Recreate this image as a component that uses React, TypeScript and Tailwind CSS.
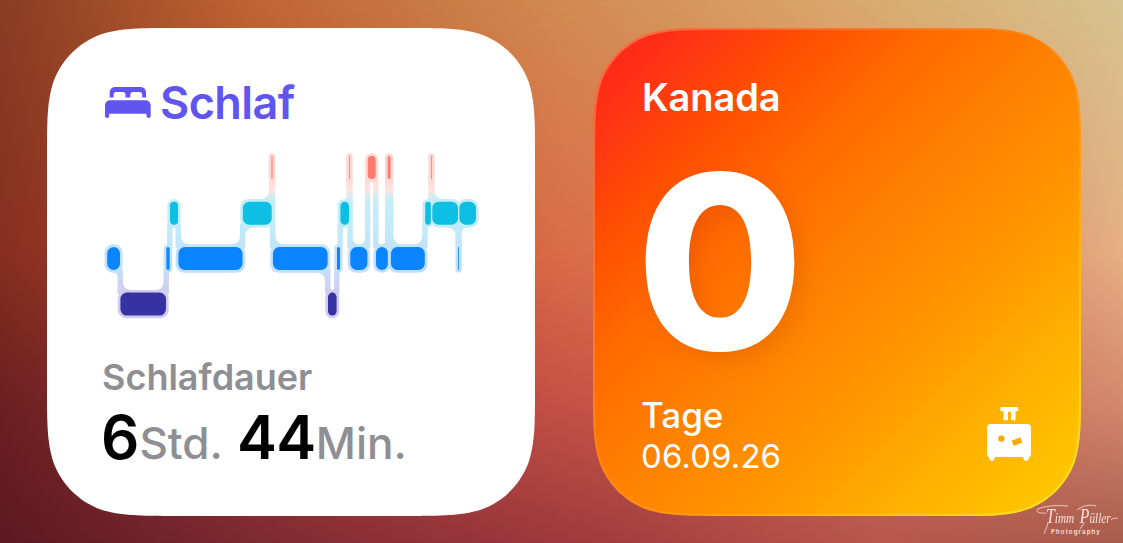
import React from 'react';

type Stage = 'awake' | 'rem' | 'core' | 'deep';

interface Segment {
  stage: Stage;
  start: number;
  end: number;
}

const STAGES: Record<Stage, { y: number; color: string }> = {
  awake: { y: 6, color: '#fb7b6d' },
  rem: { y: 51.7, color: '#0dbfe3' },
  core: { y: 97, color: '#0a84ff' },
  deep: { y: 142.6, color: '#3732a3' },
};

const BAR_HEIGHT = 23;
const PAD = 2.7;

const segments: Segment[] = [
  { stage: 'core', start: 5, end: 18.2 },
  { stage: 'deep', start: 18.2, end: 64.2 },
  { stage: 'core', start: 64.2, end: 67.8 },
  { stage: 'rem', start: 67.8, end: 76.2 },
  { stage: 'core', start: 76.2, end: 140.7 },
  { stage: 'rem', start: 140.7, end: 169.9 },
  { stage: 'awake', start: 169.3, end: 170.7 },
  { stage: 'core', start: 170.7, end: 225.8 },
  { stage: 'deep', start: 225.8, end: 234.8 },
  { stage: 'core', start: 234.8, end: 238.2 },
  { stage: 'rem', start: 238.2, end: 247.2 },
  { stage: 'awake', start: 246.9, end: 248.1 },
  { stage: 'core', start: 248.1, end: 265.6 },
  { stage: 'awake', start: 265.6, end: 273.8 },
  { stage: 'core', start: 273.8, end: 286 },
  { stage: 'awake', start: 285.5, end: 288.7 },
  { stage: 'core', start: 288.7, end: 323 },
  { stage: 'rem', start: 323, end: 329 },
  { stage: 'awake', start: 328.9, end: 330.1 },
  { stage: 'rem', start: 330.1, end: 356.2 },
  { stage: 'core', start: 356, end: 357.2 },
  { stage: 'rem', start: 357.2, end: 374.2 },
];

// Vertical link between two neighbouring stages, flared where it meets a bar
function connectorPath(a: Segment, b: Segment) {
  const x = (a.end + b.start) / 2;
  const down = STAGES[b.stage].y > STAGES[a.stage].y;
  const dir = down ? 1 : -1;
  const ya = STAGES[a.stage].y + (down ? BAR_HEIGHT + PAD : -PAD);
  const yb = STAGES[b.stage].y + (down ? -PAD : BAR_HEIGHT + PAD);
  const ra = Math.min(9, Math.max(0, (a.end - a.start) / 2 - PAD));
  const rb = Math.min(9, Math.max(0, (b.end - b.start) / 2 - PAD));
  const l = x - PAD;
  const r = x + PAD;
  return [
    `M${l - ra} ${ya - dir * 3}`,
    `L${l - ra} ${ya}`,
    `Q${l} ${ya} ${l} ${ya + dir * ra}`,
    `L${l} ${yb + dir * 4}`,
    `L${r + rb} ${yb + dir * 3}`,
    `L${r + rb} ${yb}`,
    `Q${r} ${yb} ${r} ${yb - dir * rb}`,
    `L${r} ${ya - dir * 4}`,
    'Z',
  ].join(' ');
}

function SleepChart() {
  return (
    <svg width="380" height="172" viewBox="0 0 380 172" className="block">
      <defs>
        <linearGradient id="halo" gradientUnits="userSpaceOnUse" x1="0" y1="0" x2="0" y2="172">
          <stop offset="0" stopColor="#fdd6d1" />
          <stop offset="0.15" stopColor="#fdd6d1" />
          <stop offset="0.23" stopColor="#fde4e1" />
          <stop offset="0.29" stopColor="#c4eef7" />
          <stop offset="0.43" stopColor="#c0ecf8" />
          <stop offset="0.56" stopColor="#c3e3fb" />
          <stop offset="0.7" stopColor="#c3dffa" />
          <stop offset="0.82" stopColor="#d0cdee" />
          <stop offset="1" stopColor="#d0caf0" />
        </linearGradient>
      </defs>
      <g fill="url(#halo)">
        {segments.map((s, i) => (
          <rect
            key={i}
            x={s.start - PAD + 0.2}
            y={STAGES[s.stage].y - PAD}
            width={s.end - s.start + 2 * PAD - 0.4}
            height={BAR_HEIGHT + 2 * PAD}
            rx={Math.min(8.5, (s.end - s.start) / 2 + PAD - 0.2)}
          />
        ))}
        {segments.slice(1).map((s, i) => (
          <path key={i} d={connectorPath(segments[i], s)} />
        ))}
      </g>
      {segments.map((s, i) => (
        <rect
          key={i}
          x={s.start + 0.2}
          y={STAGES[s.stage].y}
          width={s.end - s.start - 0.4}
          height={BAR_HEIGHT}
          rx={Math.min(6.5, (s.end - s.start) / 2)}
          fill={STAGES[s.stage].color}
        />
      ))}
    </svg>
  );
}

function BedIcon() {
  return (
    <svg width="46" height="32" viewBox="0 0 46 32" fill="#6155f0" className="block">
      <path d="M4.7 10.5V5.8C4.7 2.2 6.8 0 10.3 0H35.2C38.8 0 41 2.2 41 5.8V10.5H37.2V7.8C37.2 6 36.2 5.1 34.5 5.1H28.3C26.3 5.1 25.3 6 25.3 7.8V10.5H20.5V7.8C20.5 6 19.5 5.1 17.5 5.1H11.3C9.5 5.1 8.6 6 8.6 7.8V10.5Z" />
      <path d="M0 19C0 15.2 2.2 13.3 5.8 13.3H39.8C43.5 13.3 45.7 15.2 45.7 19V29C45.7 31.5 41.5 31.5 41.5 29V26.8H4.2V29C4.2 31.5 0 31.5 0 29Z" />
    </svg>
  );
}

function LuggageIcon() {
  return (
    <svg width="46" height="56" viewBox="0 0 46 56" className="block">
      <path
        fill="#fff"
        d="M15 1H31Q32.2 1 32.2 2.500V4Q32.200 5.300 31 5.300H29.500V14.200H25V5.800H22V14.200H17.500V5.300H15.500Q14.300 5.300 14.300 4V2.500Q14.300 1 15 1Z"
      />
      <path
        fill="#fff"
        d="M5 18H41Q45 18 45 22V47Q45 50.500 43.500 50.800L42.500 53Q41.800 55 40 55Q38 55 37.500 53L37 51H9L8.500 53Q8 55 6 55Q4.200 55 3.500 53L2.500 50.800Q1 50.500 1 47V22Q1 18 5 18Z"
      />
      <circle cx="15.400" cy="32.600" r="3.200" fill="#f9a808" />
      <rect x="26.300" y="32.800" width="9.400" height="5.600" fill="#f9a808" transform="rotate(-22 31 35.600)" />
    </svg>
  );
}

function SleepWidget() {
  return (
    <section className="flex h-[488px] w-[488px] flex-col bg-white pl-[55px] pt-[53px] [clip-path:path('M130_0H358C395.500_0_414.200_0_434.300_6.400C456.300_14.400_473.600_31.700_481.600_53.700C488_73.800_488_92.500_488_130V358C488_395.500_488_414.200_481.600_434.300C473.600_456.300_456.300_473.600_434.300_481.600C414.200_488_395.500_488_358_488H130C92.500_488_73.800_488_53.700_481.600C31.700_473.600_14.400_456.300_6.400_434.300C0_414.200_0_395.500_0_358V130C0_92.500_0_73.800_6.400_53.700C14.400_31.700_31.700_14.400_53.700_6.400C73.800_0_92.500_0_130_0Z')]">
      <div className="flex h-11 items-center gap-[9px] pl-[3px] text-[#6155f0]">
        <BedIcon />
        <h2 className="text-[45px] leading-[44px] font-semibold tracking-[-0.6px]">Schlaf</h2>
      </div>
      <div className="mt-[25px]">
        <SleepChart />
      </div>
      <p className="mt-[37px] text-[36px] leading-none font-semibold text-[#8e8e93]">Schlafdauer</p>
      <p className="mt-[12px] flex items-baseline text-[60px] leading-none font-semibold whitespace-nowrap text-black">
        <span className="-ml-px">6</span>
        <span className="text-[44px] font-medium text-[#8e8e93]">Std.</span>
        <span className="ml-[14px] tracking-[-0.5px]">44</span>
        <span className="text-[44px] font-medium text-[#8e8e93]">Min.</span>
      </p>
    </section>
  );
}

function CountdownWidget() {
  return (
    <section className="relative flex h-[488px] w-[488px] flex-col bg-[linear-gradient(135deg,#ff2a18_6%,#ff3a10_14%,#ff5000_23%,#ff6a00_35%,#ff8000_49%,#ff9400_64%,#ffb000_80%,#ffc600_95%)] pt-[50px] pr-[49px] pl-[48px] text-white [clip-path:path('M130_0H358C395.500_0_414.200_0_434.300_6.400C456.300_14.400_473.600_31.700_481.600_53.700C488_73.800_488_92.500_488_130V358C488_395.500_488_414.200_481.600_434.300C473.600_456.300_456.300_473.600_434.300_481.600C414.200_488_395.500_488_358_488H130C92.500_488_73.800_488_53.700_481.600C31.700_473.600_14.400_456.300_6.400_434.300C0_414.200_0_395.500_0_358V130C0_92.500_0_73.800_6.400_53.700C14.400_31.700_31.700_14.400_53.700_6.400C73.800_0_92.500_0_130_0Z')]">
      {/* Glass rim */}
      <svg className="pointer-events-none absolute inset-0" width="488" height="488" viewBox="0 0 488 488" fill="none">
        <defs>
          <linearGradient id="rim" x1="0" y1="0" x2="1" y2="1">
            <stop offset="0" stopColor="#ff7a50" stopOpacity="0.8" />
            <stop offset="0.5" stopColor="#ffa040" stopOpacity="0.25" />
            <stop offset="1" stopColor="#ffee30" stopOpacity="0.8" />
          </linearGradient>
        </defs>
        <path
          stroke="url(#rim)"
          strokeWidth="4"
          d="M130 0H358C395.500 0 414.200 0 434.300 6.400C456.300 14.400 473.600 31.700 481.600 53.700C488 73.800 488 92.500 488 130V358C488 395.500 488 414.200 481.600 434.300C473.600 456.300 456.300 473.600 434.300 481.600C414.200 488 395.500 488 358 488H130C92.500 488 73.800 488 53.700 481.600C31.700 473.600 14.400 456.300 6.400 434.300C0 414.200 0 395.500 0 358V130C0 92.500 0 73.800 6.400 53.700C14.400 31.700 31.700 14.400 53.700 6.400C73.800 0 92.500 0 130 0Z"
        />
      </svg>
      <h2 className="ml-px text-[38px] leading-none font-semibold tracking-[-0.1px]">Kanada</h2>
      <div className="mt-[25px] -ml-[5px] text-[243px] leading-none font-extrabold [text-shadow:8px_8px_20px_rgba(190,70,0,0.25)]">
        0
      </div>
      <div className="mt-[14px] flex items-start justify-between">
        <div>
          <p className="text-[35px] leading-[34px] font-medium">Tage</p>
          <p className="mt-[8px] text-[33px] leading-[32px] tracking-[0.1px]">06.09.26</p>
        </div>
        <div className="mt-[8px]">
          <LuggageIcon />
        </div>
      </div>
    </section>
  );
}

function Signature() {
  return (
    <div className="absolute top-[503px] left-[1034px] h-[36px] w-[86px] text-[#fbe3dc]">
      {/* Pen flourishes around the initials */}
      <svg className="absolute inset-0" width="86" height="36" viewBox="0 0 86 36" fill="none" stroke="currentColor" strokeWidth="0.8">
        <path d="M12 10C6 11 0 8 4 6C10 3 22 2 34 3M14 20C13 24 11 28 10 31M43 7C48 3 55 1 62 3M50 20L46 26M77 17C80 14 82 16 84 15" />
      </svg>
      <span className="absolute top-[3px] left-[12px] flex origin-left scale-x-[0.75] items-baseline font-['Liberation_Serif',serif] text-[15px] leading-none whitespace-pre italic">
        <span className="text-[21px]">T</span>imm  <span className="text-[21px]">P</span>üller
      </span>
      <span className="absolute top-[26px] left-[17px] text-[6px] leading-none font-semibold tracking-[1.150px]">
        Photography
      </span>
    </div>
  );
}

function App() {
  return (
    <div className="relative h-[543px] w-[1123px] overflow-hidden bg-[linear-gradient(90deg,#5b1a20,#842c33_27%,#a03c3f_53%,#b8584c_78%,#a85c4e)] font-['Inter',sans-serif]">
      {/* Wallpaper */}
      <div className="absolute inset-0 bg-[linear-gradient(90deg,#6c1f21,#a13c38_25%,#c55244_50%,#d07763_90%,#d48a6c)] [mask-image:linear-gradient(180deg,#000_400px,transparent_543px)]" />
      <div className="absolute inset-0 bg-[linear-gradient(90deg,#872f20,#b04a2b_20%,#da6c48_50%,#e0a07a_95%,#e6b084)] [mask-image:linear-gradient(180deg,#000_250px,transparent_400px)]" />
      <div className="absolute inset-0 bg-[linear-gradient(90deg,#8a3c22,#bd6432_22%,#d28a50_50%,#d9a86c_76%,#d5c38f)] [mask-image:linear-gradient(180deg,#000,transparent_250px)]" />

      <main className="relative flex gap-[58px] pt-[28px] pl-[47px]">
        <SleepWidget />
        <CountdownWidget />
      </main>
      <Signature />
    </div>
  );
}

export default App;
